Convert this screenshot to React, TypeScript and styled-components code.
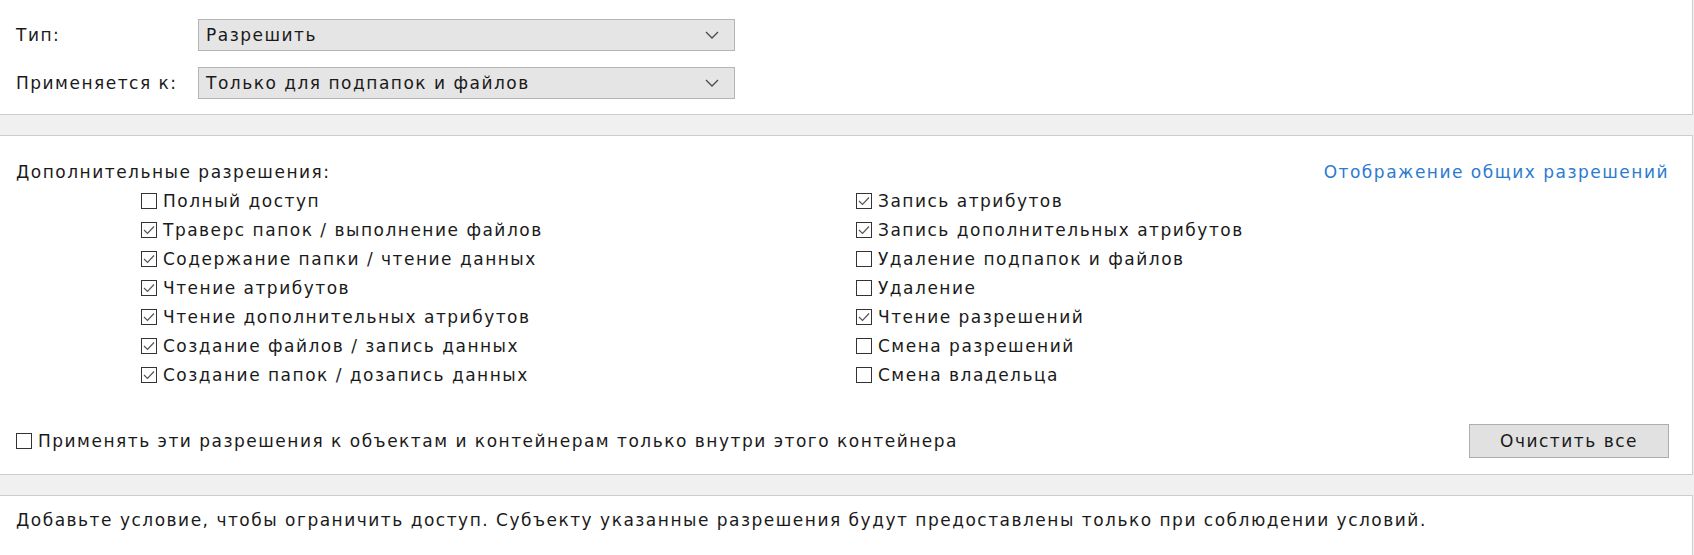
import React from 'react';
import styled, { createGlobalStyle } from 'styled-components';

const GlobalStyle = createGlobalStyle`
  html, body {
    margin: 0;
    padding: 0;
    background: #f0f0f0;
  }
  body {
    font-family: "DejaVu Sans", "Open Sans", sans-serif;
    font-size: 17px;
    letter-spacing: 1.5px;
    color: #1a1a1a;
  }
`;

const Page = styled.div`
  width: 1694px;
  height: 555px;
  overflow: hidden;
  background: #f0f0f0;
  display: flex;
  flex-direction: column;
  gap: 20px;
`;

const Panel = styled.section`
  background: #fff;
  border: 1px solid #cdcdcd;
  border-left: none;
  margin-right: 1px;
`;

const TopPanel = styled(Panel)`
  border-top: none;
  padding: 19px 20px 15px 16px;
  display: flex;
  flex-direction: column;
  gap: 16px;
`;

const FieldRow = styled.div`
  display: flex;
  align-items: center;
`;

const FieldLabel = styled.span`
  width: 182px;
  line-height: 22px;
`;

const Select = styled.div`
  width: 537px;
  height: 32px;
  box-sizing: border-box;
  background: #e5e5e5;
  border: 1px solid #b4b4b4;
  display: flex;
  align-items: center;
  justify-content: space-between;
  padding: 0 15px 0 7px;
`;

const PermPanel = styled(Panel)`
  padding: 25px 23px 16px 16px;
  display: flex;
  flex-direction: column;
`;

const HeaderRow = styled.div`
  display: flex;
  justify-content: space-between;
  align-items: center;
  line-height: 22px;
`;

const Link = styled.a`
  color: #2b7bd0;
  text-decoration: none;
  cursor: pointer;
`;

const CheckGrid = styled.div`
  display: grid;
  grid-template-columns: 715px 1fr;
  grid-template-rows: repeat(7, 29px);
  grid-auto-flow: column;
  padding-left: 125px;
  margin-top: 3px;
`;

const CheckItem = styled.label`
  display: flex;
  align-items: center;
  gap: 6px;
  line-height: 22px;
`;

const Footer = styled.div`
  display: flex;
  justify-content: space-between;
  align-items: center;
  margin-top: 35px;
`;

const Button = styled.button`
  width: 200px;
  height: 34px;
  background: #e1e1e1;
  border: 1px solid #adadad;
  font: inherit;
  letter-spacing: inherit;
  color: #1a1a1a;
  padding: 0;
`;

const ConditionPanel = styled(Panel)`
  flex: 1;
  border-bottom: none;
  padding: 13px 20px 0 16px;
  line-height: 22px;
`;

const Chevron = () => (
  <svg width="14" height="8" viewBox="0 0 14 8">
    <polyline points="1,1 7,7 13,1" fill="none" stroke="#4a4a4a" strokeWidth="1.3" />
  </svg>
);

const Box = ({ checked }: { checked: boolean }) => (
  <svg width="16" height="16" viewBox="0 0 16 16" style={{ flexShrink: 0 }}>
    <rect x="0.5" y="0.5" width="15" height="15" fill="#fff" stroke="#333" />
    {checked && (
      <polyline points="3,8 6.5,11.5 13,4.5" fill="none" stroke="#555" strokeWidth="1.2" />
    )}
  </svg>
);

const Check = ({ label, checked }: { label: string; checked: boolean }) => (
  <CheckItem>
    <Box checked={checked} />
    {label}
  </CheckItem>
);

const perms: [string, boolean][] = [
  ['Полный доступ', false],
  ['Траверс папок / выполнение файлов', true],
  ['Содержание папки / чтение данных', true],
  ['Чтение атрибутов', true],
  ['Чтение дополнительных атрибутов', true],
  ['Создание файлов / запись данных', true],
  ['Создание папок / дозапись данных', true],
  ['Запись атрибутов', true],
  ['Запись дополнительных атрибутов', true],
  ['Удаление подпапок и файлов', false],
  ['Удаление', false],
  ['Чтение разрешений', true],
  ['Смена разрешений', false],
  ['Смена владельца', false],
];

export default function App() {
  return (
    <>
      <GlobalStyle />
      <Page>
        <TopPanel>
          <FieldRow>
            <FieldLabel>Тип:</FieldLabel>
            <Select>
              <span>Разрешить</span>
              <Chevron />
            </Select>
          </FieldRow>
          <FieldRow>
            <FieldLabel>Применяется к:</FieldLabel>
            <Select>
              <span>Только для подпапок и файлов</span>
              <Chevron />
            </Select>
          </FieldRow>
        </TopPanel>

        <PermPanel>
          <HeaderRow>
            <span>Дополнительные разрешения:</span>
            <Link>Отображение общих разрешений</Link>
          </HeaderRow>
          <CheckGrid>
            {perms.map(([label, checked]) => (
              <Check key={label} label={label} checked={checked} />
            ))}
          </CheckGrid>
          <Footer>
            <Check
              label="Применять эти разрешения к объектам и контейнерам только внутри этого контейнера"
              checked={false}
            />
            <Button>Очистить все</Button>
          </Footer>
        </PermPanel>

        <ConditionPanel>
          Добавьте условие, чтобы ограничить доступ. Субъекту указанные разрешения будут
          предоставлены только при соблюдении условий.
        </ConditionPanel>
      </Page>
    </>
  );
}
